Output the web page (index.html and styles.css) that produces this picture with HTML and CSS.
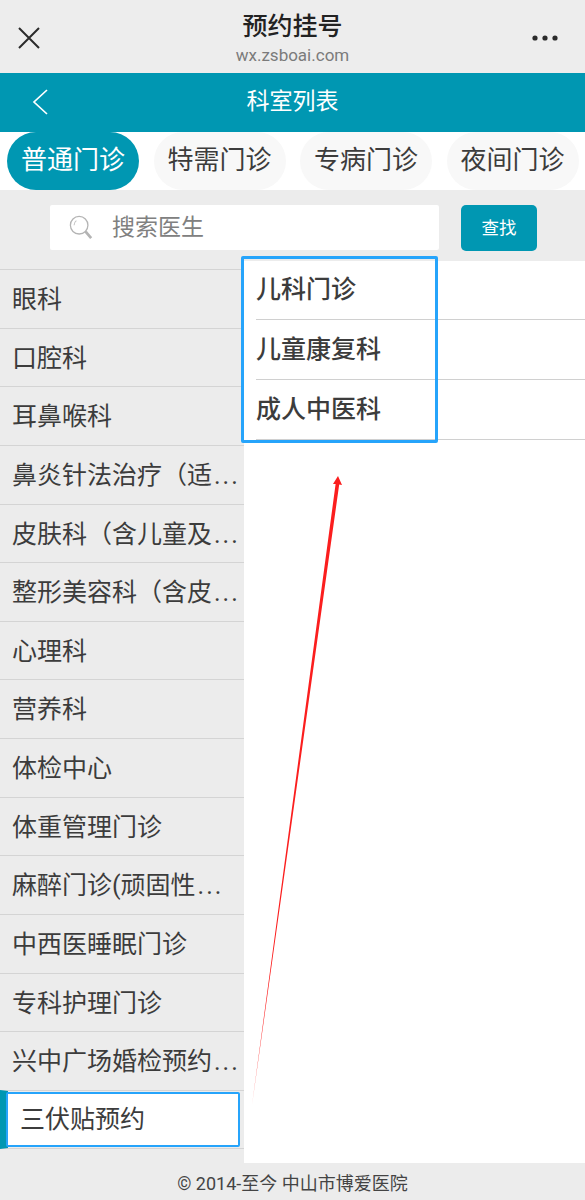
FILE: index.html
```html
<!DOCTYPE html>
<html lang="zh-CN">
<head>
  <meta charset="UTF-8">
  <meta name="viewport" content="width=device-width, initial-scale=1.0">
  <title>预约挂号</title>
  <link rel="stylesheet" href="styles.css">
</head>
<body>
  <div class="page">
    <!-- WeChat title bar -->
    <header class="wx-bar">
      <svg class="wx-close" width="24" height="24" viewBox="0 0 24 24"><path d="M2 2 L22 22 M22 2 L2 22" stroke="#2b2b2b" stroke-width="2" fill="none"/></svg>
      <div class="wx-title">
        <h1>预约挂号</h1>
        <p>wx.zsboai.com</p>
      </div>
      <svg class="wx-more" width="26" height="6" viewBox="0 0 26 6"><circle cx="3" cy="3" r="2.6" fill="#2b2b2b"/><circle cx="13" cy="3" r="2.6" fill="#2b2b2b"/><circle cx="23" cy="3" r="2.6" fill="#2b2b2b"/></svg>
    </header>

    <div class="nav-bar">
      <svg class="nav-back" width="16" height="26" viewBox="0 0 16 26"><path d="M15 1 L2 13 L15 25" stroke="#fff" stroke-width="1.7" fill="none"/></svg>
      <span>科室列表</span>
    </div>

    <nav class="tabs">
      <a class="tab active">普通门诊</a>
      <a class="tab">特需门诊</a>
      <a class="tab">专病门诊</a>
      <a class="tab">夜间门诊</a>
    </nav>

    <div class="search">
      <div class="search-box">
        <svg width="24" height="26" viewBox="0 0 26 28"><circle cx="11" cy="11" r="9.5" stroke="#b4b4b4" stroke-width="1.4" fill="none"/><path d="M5.5 11 A6 6 0 0 1 8 6" stroke="#c4c4c4" stroke-width="1.2" fill="none"/><path d="M18 18 L24 25" stroke="#b4b4b4" stroke-width="3" fill="none"/></svg>
        <span>搜索医生</span>
      </div>
      <button class="search-btn">查找</button>
    </div>

    <main class="content">
      <ul class="dept-list">
        <li>眼科</li>
        <li>口腔科</li>
        <li>耳鼻喉科</li>
        <li>鼻炎针法治疗（适<span class="dots">...</span></li>
        <li>皮肤科（含儿童及<span class="dots">...</span></li>
        <li>整形美容科（含皮<span class="dots">...</span></li>
        <li>心理科</li>
        <li>营养科</li>
        <li>体检中心</li>
        <li>体重管理门诊</li>
        <li>麻醉门诊(顽固性<span class="dots">...</span></li>
        <li>中西医睡眠门诊</li>
        <li>专科护理门诊</li>
        <li>兴中广场婚检预约<span class="dots">...</span></li>
        <li class="current"><span>三伏贴预约</span></li>
      </ul>
      <ul class="sub-list">
        <li>儿科门诊</li>
        <li>儿童康复科</li>
        <li>成人中医科</li>
      </ul>
    </main>

    <footer class="footer">© 2014-至今 中山市博爱医院</footer>

    <!-- annotations drawn over the screenshot -->
    <div class="mark-box"></div>
    <svg class="mark-arrow" width="585" height="1200" viewBox="0 0 585 1200">
      <path d="M252 1105 L335.6 484 L333 484 L338 476 L342 485 L339.2 484.5 Z" fill="#fb1e1e"/>
    </svg>
  </div>
</body>
</html>
```

FILE: styles.css
```css
* {
  box-sizing: border-box;
}
body {
  margin: 0;
  font-family: "Roboto", "Noto Sans CJK SC", sans-serif;
  background: #fff;
  color: #3c3c3c;
}
ul {
  margin: 0;
  padding: 0;
  list-style: none;
}
.page {
  position: relative;
  width: 585px;
  height: 1200px;
  overflow: hidden;
  display: flex;
  flex-direction: column;
}

/* Title bar */
.wx-bar {
  height: 73px;
  flex: none;
  background: #ededed;
  display: flex;
  align-items: center;
  justify-content: space-between;
  padding: 3px 27px 0 17px;
  position: relative;
}
.wx-title {
  position: absolute;
  left: 0;
  right: 0;
  top: 10px;
  text-align: center;
}
.wx-title h1 {
  margin: 0;
  font-size: 25px;
  line-height: 34px;
  font-weight: 500;
  color: #222;
}
.wx-title p {
  margin: 1px 0 0;
  font-size: 17px;
  line-height: 20px;
  color: #7b7b7b;
}

.nav-bar {
  height: 59px;
  flex: none;
  background: #0097b2;
  color: #fff;
  font-size: 23px;
  display: flex;
  align-items: center;
  justify-content: center;
  padding-bottom: 8px;
  position: relative;
}
.nav-back {
  position: absolute;
  left: 32px;
  top: 16px;
}

/* Tabs */
.tabs {
  height: 58px;
  flex: none;
  background: #fff;
  display: flex;
  gap: 14.5px;
  padding-left: 7px;
}
.tab {
  width: 132px;
  border-radius: 29px;
  background: #f8f8f8;
  font-size: 26px;
  color: #3c3c3c;
  display: flex;
  align-items: center;
  justify-content: center;
  padding-bottom: 7px;
}
.tab.active {
  background: #0097b2;
  color: #fff;
}

/* Search */
.search {
  height: 71px;
  flex: none;
  background: #ececec;
  display: flex;
  gap: 22px;
  padding: 15px 0 0 50px;
}
.search-box {
  width: 389px;
  height: 45px;
  background: #fff;
  border-radius: 2px;
  display: flex;
  align-items: center;
  gap: 19px;
  padding-left: 19px;
  font-size: 23px;
  color: #808080;
}
.search-box span {
  margin-top: -5px;
}
.search-btn {
  width: 76px;
  height: 46px;
  border: none;
  border-radius: 5px;
  background: #0097b2;
  color: #fff;
  font-family: inherit;
  font-size: 17.5px;
  padding: 0 0 4px;
}

/* Department lists */
.content {
  flex: 1;
  display: flex;
  min-height: 0;
}
.dept-list {
  width: 244px;
  flex: none;
  background: #ececec;
  padding-top: 8px;
}
.dept-list li {
  height: 58.65px;
  line-height: 59px;
  padding-left: 12px;
  border-top: 1px solid #d4d4d4;
  font-size: 25px;
  white-space: nowrap;
}
.dept-list .dots {
  letter-spacing: 2px;
  margin-left: 2px;
}
.dept-list li:last-child {
  border-bottom: 1px solid #d4d4d4;
}
.dept-list .current {
  padding: 1px 4px 3px 0;
  border-left: 8px solid #0097b2;
  line-height: normal;
}
.dept-list .current span {
  display: block;
  height: 55px;
  line-height: 52px;
  margin-left: -2px;
  padding-left: 12px;
  background: #fff;
  border: 2px solid #26a4fb;
  border-radius: 2px;
}
.sub-list {
  flex: 1;
  background: #fff;
  padding: 0 0 0 12px;
}
.sub-list li {
  height: 60px;
  line-height: 60px;
  border-bottom: 1px solid #d0d0d0;
  font-size: 25px;
  font-weight: 500;
}
.sub-list li:first-child {
  height: 59px;
  line-height: 58px;
}

.footer {
  height: 37px;
  flex: none;
  background: #ececec;
  text-align: center;
  font-size: 18px;
  line-height: 42px;
  color: #444;
}

/* Annotations */
.mark-box {
  position: absolute;
  left: 241px;
  top: 256px;
  width: 197px;
  height: 187px;
  border: 3px solid #26a4fb;
  border-radius: 2px;
}
.mark-arrow {
  position: absolute;
  left: 0;
  top: 0;
}
```
